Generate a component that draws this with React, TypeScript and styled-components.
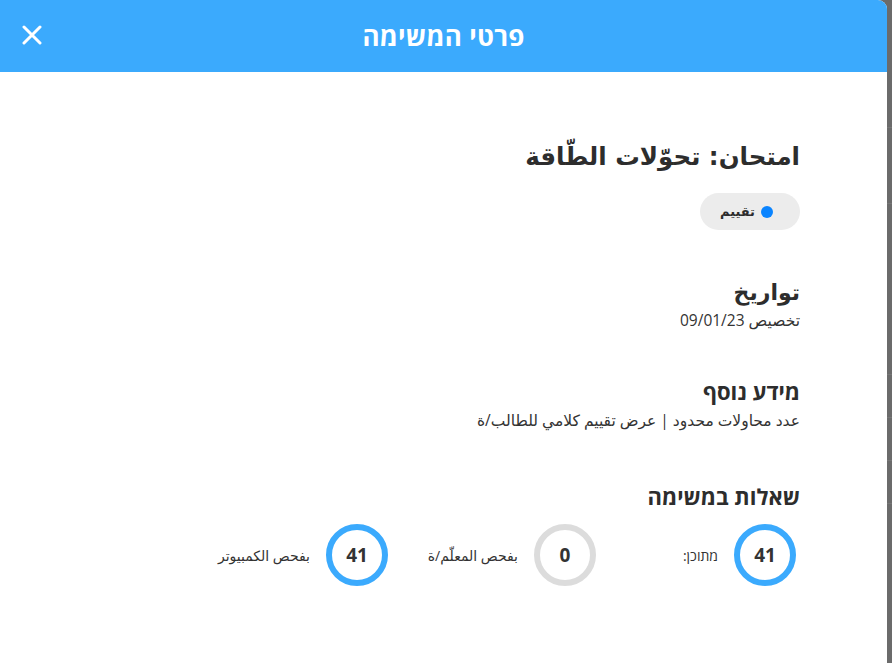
import styled, { createGlobalStyle } from "styled-components";

const GlobalStyle = createGlobalStyle`
  html, body {
    margin: 0;
    padding: 0;
    height: 100%;
    background: #6b6b6b;
    font-family: "Open Sans", "DejaVu Sans", sans-serif;
  }
  #root {
    height: 100%;
  }
`;

const Screen = styled.div`
  display: flex;
  height: 663px;
  overflow: hidden;
`;

const Panel = styled.div`
  width: 887px;
  height: 100%;
  background: #fff;
  border-top-right-radius: 9px;
  overflow: hidden;
  direction: rtl;
  display: flex;
  flex-direction: column;
`;

const Backdrop = styled.div`
  flex: 1;
  background: #6b6b6b;
  display: flex;
  flex-direction: column;
`;

const BackdropLine = styled.div<{ top: number }>`
  margin-top: ${(p) => p.top}px;
  height: 1px;
  background: #777;
`;

const Header = styled.header`
  height: 72px;
  flex-shrink: 0;
  background: #3baafd;
  display: flex;
  align-items: center;
  justify-content: center;
  position: relative;
`;

const HeaderTitle = styled.h1`
  margin: 0;
  color: #fff;
  font-size: 26px;
  font-weight: 700;
  letter-spacing: 0.3px;
`;

const CloseButton = styled.button`
  position: absolute;
  left: 18px;
  top: 22px;
  width: 28px;
  height: 26px;
  padding: 0;
  border: 0;
  background: transparent;
  display: flex;
  align-items: center;
  justify-content: center;
  cursor: pointer;
`;

const Body = styled.div`
  padding: 66px 87px 0 0;
  display: flex;
  flex-direction: column;
  align-items: flex-start;
  color: #2d2d2d;
`;

const Title = styled.h2`
  margin: 0;
  font-family: "DejaVu Sans", "Open Sans", sans-serif;
  font-size: 24.5px;
  line-height: 38px;
  font-weight: 700;
`;

const Badge = styled.div`
  margin-top: 17px;
  height: 37px;
  width: 100px;
  box-sizing: border-box;
  padding: 0 27px 0 0;
  border-radius: 19px;
  background: #ececec;
  display: flex;
  align-items: center;
  gap: 6px;
  font-family: "DejaVu Sans", sans-serif;
  font-size: 13px;
  font-weight: 700;
`;

const Dot = styled.span`
  width: 12px;
  height: 12px;
  border-radius: 50%;
  background: #0a84ff;
`;

const Section = styled.section<{ gap: number }>`
  margin-top: ${(p) => p.gap}px;
  display: flex;
  flex-direction: column;
  align-items: flex-start;
`;

const SectionHeading = styled.h3`
  margin: 0;
  font-size: 22px;
  line-height: 28px;
  font-weight: 700;
`;

const SectionText = styled.p`
  margin: 4px 0 0;
  font-size: 15.5px;
  line-height: 22px;
  color: #333;
`;

const StatsRow = styled.div`
  margin-top: 14px;
  padding-right: 4px;
  display: flex;
`;

const Stat = styled.div<{ span: number }>`
  width: ${(p) => p.span}px;
  display: flex;
  align-items: center;
  gap: 16px;
`;

const Ring = styled.div<{ active: boolean }>`
  width: 62px;
  height: 62px;
  box-sizing: border-box;
  border-radius: 50%;
  border: 6px solid ${(p) => (p.active ? "#3baafd" : "#dcdcdc")};
  display: flex;
  align-items: center;
  justify-content: center;
  font-size: 19px;
  font-weight: 700;
  color: #333;
`;

const StatLabel = styled.span`
  font-size: 14px;
  color: #333;
`;

const stats = [
  { value: 41, label: "מתוכן:", active: true, span: 200 },
  { value: 0, label: "بفحص المعلّم/ة", active: false, span: 208 },
  { value: 41, label: "بفحص الكمبيوتر", active: true, span: 200 },
];

export default function App() {
  return (
    <Screen>
      <GlobalStyle />
      <Panel>
        <Header>
          <CloseButton aria-label="close">
            <svg width="20" height="20" viewBox="0 0 20 20">
              <path
                d="M2 2 L18 18 M18 2 L2 18"
                stroke="#fff"
                strokeWidth="3"
                strokeLinecap="round"
              />
            </svg>
          </CloseButton>
          <HeaderTitle>פרטי המשימה</HeaderTitle>
        </Header>
        <Body>
          <Title>امتحان: تحوّلات الطّاقة</Title>
          <Badge>
            <Dot />
            تقييم
          </Badge>

          <Section gap={47}>
            <SectionHeading>تواريخ</SectionHeading>
            <SectionText>تخصيص 09/01/23</SectionText>
          </Section>

          <Section gap={46}>
            <SectionHeading>מידע נוסף</SectionHeading>
            <SectionText>عدد محاولات محدود | عرض تقييم كلامي للطالب/ة</SectionText>
          </Section>

          <Section gap={51}>
            <SectionHeading>שאלות במשימה</SectionHeading>
            <StatsRow>
              {stats.map((s) => (
                <Stat key={s.label} span={s.span}>
                  <Ring active={s.active}>{s.value}</Ring>
                  <StatLabel>{s.label}</StatLabel>
                </Stat>
              ))}
            </StatsRow>
          </Section>
        </Body>
      </Panel>
      <Backdrop>
        <BackdropLine top={127} />
        <BackdropLine top={75} />
        <BackdropLine top={170} />
        <BackdropLine top={42} />
        <BackdropLine top={42} />
        <BackdropLine top={42} />
      </Backdrop>
    </Screen>
  );
}
